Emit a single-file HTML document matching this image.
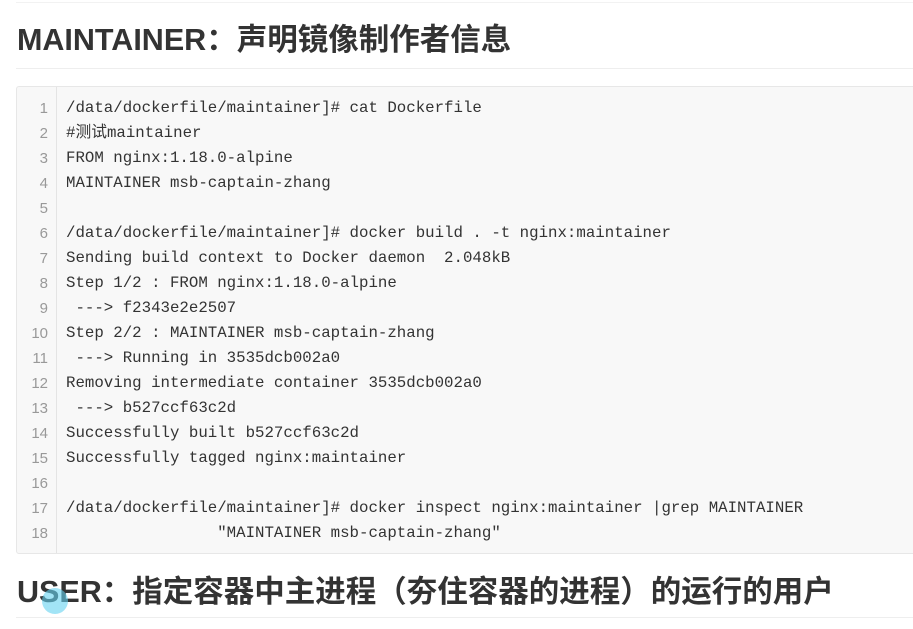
<!DOCTYPE html>
<html><head><meta charset="utf-8"><style>
body{margin:0;width:913px;height:629px;overflow:hidden;background:#fff;font-family:"Liberation Sans","Noto Sans CJK SC",sans-serif;color:#333;position:relative}
.hr{position:absolute;left:16px;right:0;height:1px;background:#eee}
h2{position:absolute;left:17px;margin:0;font-size:30.5px;font-weight:bold;line-height:40px;white-space:nowrap;color:#333}
.code{position:absolute;left:16px;top:86px;width:910px;height:466px;background:#f8f8f8;border:1px solid #e7e7e7;border-radius:3px}
.bar{position:absolute;left:39px;top:0;bottom:0;width:1px;background:#e4e4e4}
.lnw{position:absolute;left:0;top:9px;width:31px;text-align:right;color:#999}
.lnw div{height:25px;line-height:25px;font-size:15px}
.src{position:absolute;left:49px;top:9px;color:#333}
.src div{height:25px;line-height:25px;font-size:15.75px;font-family:"Liberation Mono","Noto Sans CJK SC",monospace;white-space:pre}
.cur{position:absolute;left:42px;top:588px;width:26px;height:26px;border-radius:50%;background:rgba(100,210,240,.6)}
</style></head><body>
<div class="hr" style="top:2px;background:#f2f2f2"></div>
<h2 style="top:20px">MAINTAINER：声明镜像制作者信息</h2>
<div class="hr" style="top:68px"></div>
<div class="code">
<div class="bar"></div>
<div class="lnw"><div>1</div><div>2</div><div>3</div><div>4</div><div>5</div><div>6</div><div>7</div><div>8</div><div>9</div><div>10</div><div>11</div><div>12</div><div>13</div><div>14</div><div>15</div><div>16</div><div>17</div><div>18</div></div>
<div class="src"><div>/data/dockerfile/maintainer]# cat Dockerfile</div><div>#测试maintainer</div><div>FROM nginx:1.18.0-alpine</div><div>MAINTAINER msb-captain-zhang</div><div> </div><div>/data/dockerfile/maintainer]# docker build . -t nginx:maintainer</div><div>Sending build context to Docker daemon  2.048kB</div><div>Step 1/2 : FROM nginx:1.18.0-alpine</div><div> ---> f2343e2e2507</div><div>Step 2/2 : MAINTAINER msb-captain-zhang</div><div> ---> Running in 3535dcb002a0</div><div>Removing intermediate container 3535dcb002a0</div><div> ---> b527ccf63c2d</div><div>Successfully built b527ccf63c2d</div><div>Successfully tagged nginx:maintainer</div><div> </div><div>/data/dockerfile/maintainer]# docker inspect nginx:maintainer |grep MAINTAINER</div><div>                "MAINTAINER msb-captain-zhang"</div></div>
</div>
<h2 style="top:572px">USER：指定容器中主进程（夯住容器的进程）的运行的用户</h2>
<div class="cur"></div>
<div class="hr" style="top:617px"></div>
</body></html>
